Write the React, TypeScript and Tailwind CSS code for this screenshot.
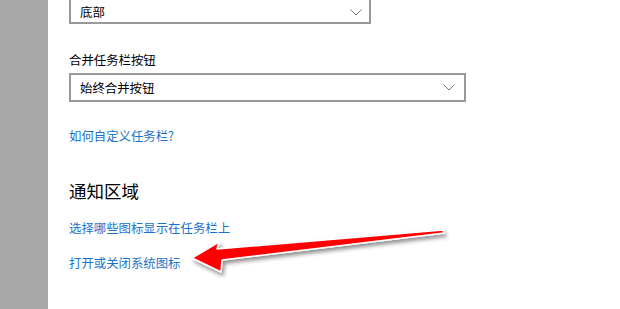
import React from "react";

const font = { fontFamily: '"Noto Sans CJK SC", "Noto Sans", sans-serif' };

function Chevron() {
  return (
    <svg width="12" height="7" viewBox="0 0 12 7" className="shrink-0">
      <polyline points="0.5,0.5 6,6 11.5,0.5" fill="none" stroke="#7a7a7a" strokeWidth="1" />
    </svg>
  );
}

export default function App() {
  return (
    <div className="relative flex w-[620px] h-[309px] overflow-hidden bg-white" style={font}>
      <div className="w-[48px] shrink-0 bg-[#a9a9a9]" />
      <div className="flex flex-col pl-[21px] text-[12.4px] text-black">
        <div className="mt-[-6px] h-[30px] w-[302px] border-2 border-[#999999] flex items-center justify-between pl-[9px] pr-[7px] pt-[6px]">
          <span className="leading-[16px]">底部</span>
          <Chevron />
        </div>
        <div className="mt-[26px] leading-[20px]">合并任务栏按钮</div>
        <div className="mt-[3px] h-[29px] w-[397px] border-2 border-[#999999] flex items-center justify-between pl-[9px] pr-[9px]">
          <span className="leading-[16px]">始终合并按钮</span>
          <Chevron />
        </div>
        <div className="mt-[24px] leading-[20px] text-[#1a73c9]">如何自定义任务栏?</div>
        <div className="mt-[33px] leading-[24px] text-[17.5px] text-black">通知区域</div>
        <div className="mt-[15px] leading-[20px] text-[#1a73c9]">选择哪些图标显示在任务栏上</div>
        <div className="mt-[15px] leading-[20px] text-[#1a73c9]">打开或关闭系统图标</div>
      </div>
      <svg className="absolute left-0 top-0" width="620" height="309" viewBox="0 0 620 309">
        <defs>
          <filter id="sh" x="-20%" y="-50%" width="140%" height="200%">
            <feDropShadow dx="2" dy="3" stdDeviation="2" floodColor="#000" floodOpacity="0.45" />
          </filter>
        </defs>
        <polygon
          points="192,258 219,242 217,249 443,230 444,233 222,260 221,272"
          fill="#ff0000"
          stroke="#ffffff"
          strokeWidth="1.5"
          strokeLinejoin="round"
          filter="url(#sh)"
        />
      </svg>
    </div>
  );
}
